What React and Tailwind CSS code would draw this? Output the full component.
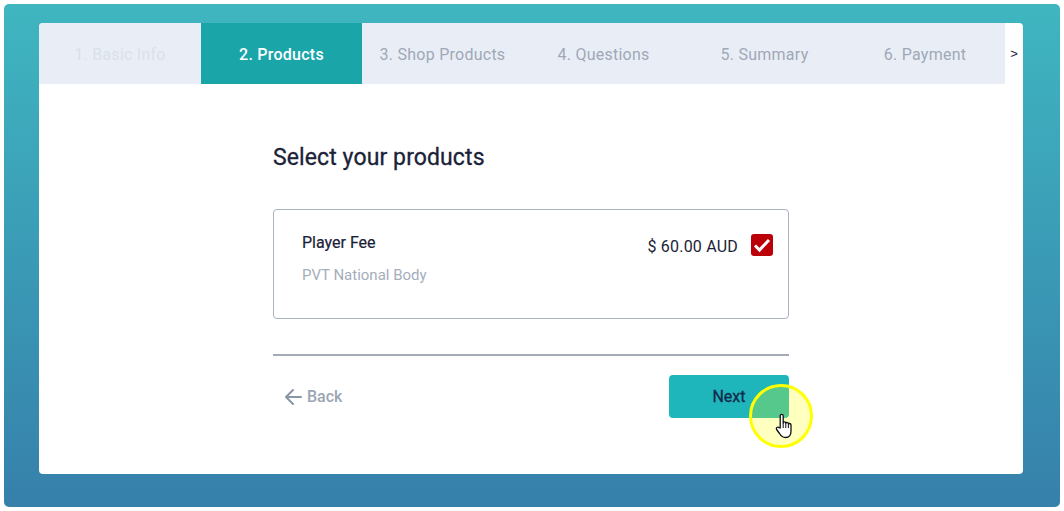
function Tab({ children, className }) {
  return (
    <div className={"shrink-0 h-full flex items-center justify-center pt-[2px] text-[16px] tracking-[0.25px] " + className}>
      {children}
    </div>
  );
}

export default function App() {
  return (
    <div className="w-[1064px] h-[511px] bg-white p-1 font-['Roboto',sans-serif]">
      <div className="w-[1056px] h-[503px] rounded-[5px] bg-gradient-to-b from-[#3fb6c0] to-[#3680ab] pt-[19px] pl-[35px]">
        <div className="w-[984px] h-[451px] bg-white rounded-[4px] overflow-hidden">
          <div className="flex h-[61px] items-stretch">
            <div className="flex w-[966px] h-full bg-[#e9eef6]">
              <Tab className="w-[162px] text-[#d9e1ea]">1. Basic Info</Tab>
              <Tab className="w-[161px] bg-[#1aa5a9] text-white font-medium">2. Products</Tab>
              <Tab className="w-[161px] text-[#9fa8b6]">3. Shop Products</Tab>
              <Tab className="w-[161px] text-[#9fa8b6]">4. Questions</Tab>
              <Tab className="w-[161px] text-[#9fa8b6]">5. Summary</Tab>
              <Tab className="w-[160px] text-[#9fa8b6]">6. Payment</Tab>
            </div>
            <div className="flex-1 flex items-center justify-center text-[13px] text-[#1a2238] font-['Liberation_Sans',sans-serif]">&gt;</div>
          </div>

          <div className="w-[516px] ml-[234px] pt-[59px]">
            <h1 className="text-[23px] leading-[30px] tracking-[0.1px] text-[#1a2238] [-webkit-text-stroke:0.3px_#1a2238]">Select your products</h1>
            <div className="mt-[36px] h-[110px] border border-[#a9b3c2] rounded-[4px] flex justify-between pl-[28px] pr-[15px]">
              <div className="pt-[23px]">
                <div className="text-[16px] leading-[20px] text-[#1a2238] [-webkit-text-stroke:0.2px_#1a2238]">Player Fee</div>
                <div className="mt-[12px] text-[15px] leading-[20px] text-[#a5aebb]">PVT National Body</div>
              </div>
              <div className="pt-[24px] flex items-start gap-[13px]">
                <span className="mt-[2px] text-[16px] leading-[22px] tracking-[0.2px] text-[#1a2238]">$ 60.00 AUD</span>
                <span className="w-[22px] h-[22px] rounded-[3px] bg-[#bc0009] flex items-center justify-center">
                  <svg width="18" height="15" viewBox="0 0 18 15" fill="none">
                    <path d="M2 7.5 L6.5 12 L16 2" stroke="white" strokeWidth="3" />
                  </svg>
                </span>
              </div>
            </div>
            <div className="mt-[35px] h-[2px] bg-[#a4a9b8]" />
            <div className="mt-[19px] flex items-center justify-between">
              <div className="flex items-center gap-[5px] pl-[11px] text-[16px] font-medium text-[#9ba5b4]">
                <svg width="18" height="18" viewBox="0 0 18 18" fill="none" stroke="#8a95a6" strokeWidth="2" strokeLinecap="round" strokeLinejoin="round">
                  <path d="M17 9 H2 M9 2 L2 9 L9 16" />
                </svg>
                Back
              </div>
              <div className="relative">
                <div className="w-[120px] h-[43px] rounded-[4px] bg-[#1eb6ba] flex items-center justify-center text-[16px] text-[#13294b] [-webkit-text-stroke:0.3px_#13294b]">Next</div>
                <div className="absolute left-[80px] top-[9px] w-[64px] h-[64px] rounded-full border-[3px] border-[#ffff00] bg-[#ffff00]/25" />
                <svg className="absolute left-[105px] top-[38px]" width="20" height="26" viewBox="0 0 20 26">
                  <path d="M6.2 15 V3 C6.2 0.8 9.2 0.8 9.2 3 V10 C9.2 8.4 11.8 8.4 11.8 10.4 C11.8 9 14.4 9 14.4 11 C14.4 10 17 10.2 17 12 V18 C17 22 15 24.5 11.5 24.5 C8 24.5 7 23 5.5 20.5 L2.6 16.5 C1.6 15 3.6 13.3 5 14.6 Z" fill="white" stroke="#111" strokeWidth="1.3" strokeLinejoin="round" />
                  <path d="M9.2 10 V15 M11.8 10.4 V15 M14.4 11 V15" stroke="#111" strokeWidth="1" />
                </svg>
              </div>
            </div>
          </div>
        </div>
      </div>
    </div>
  );
}
